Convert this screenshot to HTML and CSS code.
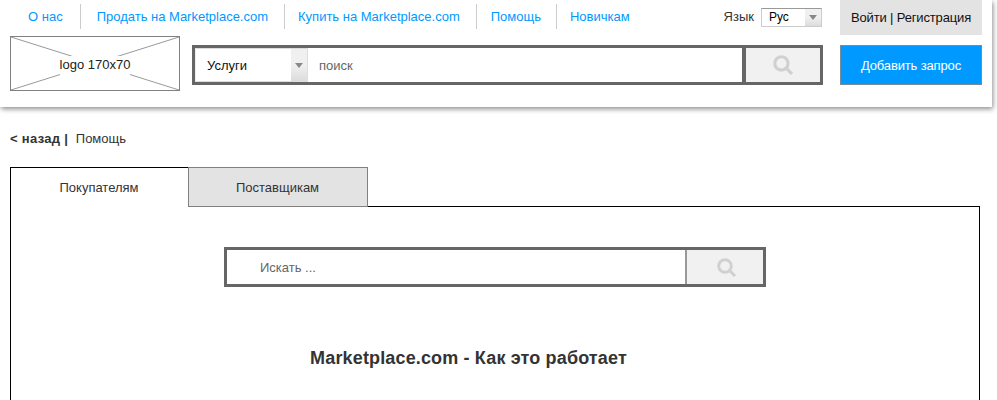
FILE: index.html
```html
<!DOCTYPE html>
<html lang="ru">
<head>
  <meta charset="UTF-8" />
  <title>Marketplace.com – Помощь</title>
  <link rel="stylesheet" href="styles.css">
</head>
<body>

  <header class="site-header">
    <div class="header-main">
      <div class="top-row">
        <nav class="top-nav">
          <a class="nav-first" href="#">О нас</a>
          <a class="nav-sell" href="#">Продать на Marketplace.com</a>
          <a class="nav-buy" href="#">Купить на Marketplace.com</a>
          <a class="nav-help" href="#">Помощь</a>
          <a class="nav-new" href="#">Новичкам</a>
        </nav>
        <div class="lang">
          <span>Язык</span>
          <div class="lang-select">
            <span class="lang-value">Рус</span>
            <span class="select-arrow"><i></i></span>
          </div>
        </div>
      </div>
      <div class="search-row">
        <div class="logo">
          <svg class="logo-cross" width="168" height="53" viewBox="0 0 168 53">
            <path d="M0 0L168 53M168 0L0 53" stroke="#999" stroke-width="1" fill="none"/>
          </svg>
          <span class="logo-text">logo 170x70</span>
        </div>
        <div class="main-search">
          <div class="category">
            <span class="category-value">Услуги</span>
            <span class="select-arrow"><i></i></span>
          </div>
          <div class="search-input">поиск</div>
          <div class="search-btn">
            <svg width="20" height="20" viewBox="0 0 19 19"><circle cx="8" cy="8" r="6.3" fill="none" stroke="#d0d0d0" stroke-width="3"/><path d="M12.5 12.5L18 18" stroke="#d0d0d0" stroke-width="3"/></svg>
          </div>
        </div>
      </div>
    </div>
    <div class="header-actions">
      <a class="login-btn" href="#">Войти | Регистрация</a>
      <a class="add-btn" href="#">Добавить запрос</a>
    </div>
  </header>

  <div class="crumbs"><b>&lt; назад |</b> <span>Помощь</span></div>

  <div class="tabs">
    <div class="tab tab-active">Покупателям</div>
    <div class="tab">Поставщикам</div>
  </div>

  <div class="tab-panel">
    <div class="help-search">
      <div class="help-input">Искать ...</div>
      <div class="help-btn">
        <svg width="19" height="19" viewBox="0 0 19 19"><circle cx="8" cy="8" r="6.3" fill="none" stroke="#d0d0d0" stroke-width="3"/><path d="M12.5 12.5L18 18" stroke="#d0d0d0" stroke-width="3"/></svg>
      </div>
    </div>
    <h1>Marketplace.com - Как это работает</h1>
  </div>

</body>
</html>
```

FILE: styles.css
```css
html, body {
  height: 400px;
  overflow: hidden;
}

body {
  font-family: "Liberation Sans", Arial, sans-serif;
  font-size: 13px;
  color: #333;
  background: #fff;
  margin: 0;
  padding: 0;
}

a {
  text-decoration: none;
}

.site-header {
  display: flex;
  justify-content: space-between;
  width: 992px;
  height: 107px;
  padding: 0 10px;
  box-sizing: border-box;
  background: #fff;
  box-shadow: 1px 2px 5px rgba(0,0,0,0.45);
}

.header-main {
  width: 813px;
}

.top-row {
  display: flex;
  justify-content: space-between;
  height: 36px;
}

.top-nav {
  display: flex;
  align-items: flex-start;
  padding-top: 4px;
}

.top-nav a {
  height: 25px;
  line-height: 25px;
  color: #0099ff;
  border-left: 1px solid #ccc;
}

.top-nav .nav-first {
  border-left: none;
  padding: 0 17px 0 18px;
}

.nav-sell { padding: 0 16px 0 16px; }
.nav-buy { padding: 0 16px 0 13px; }
.nav-help { padding: 0 15px 0 14px; }
.nav-new { padding: 0 0 0 13px; }

.lang {
  display: flex;
  align-items: flex-start;
  padding-top: 7px;
  gap: 7px;
  color: #333;
}

.lang > span {
  line-height: 20px;
}

.lang-select {
  display: flex;
  width: 59px;
  height: 17px;
  margin-top: 1px;
  border: 1px solid #ccc;
  border-top-color: #999;
  margin-right: 1px;
  font-size: 12px;
  line-height: 17px;
  color: #000;
}

.lang-value {
  flex: 1;
  padding-left: 7px;
}

.select-arrow {
  display: flex;
  align-items: center;
  justify-content: center;
  width: 16px;
  background: linear-gradient(#f0f0f0 50%, #dcdcdc);
}

.select-arrow i {
  border-left: 4px solid transparent;
  border-right: 4px solid transparent;
  border-top: 5px solid #888;
}

.search-row {
  display: flex;
  align-items: flex-start;
  gap: 12px;
}

.logo {
  position: relative;
  display: flex;
  align-items: center;
  justify-content: center;
  width: 170px;
  height: 55px;
  box-sizing: border-box;
  border: 1px solid #808080;
  color: #222;
}

.logo-cross {
  position: absolute;
  left: 0;
  top: 0;
}

.logo-text {
  position: relative;
  background: #fff;
  line-height: 16px;
  padding: 1px 0 3px;
  margin-top: 5px;
}

.main-search {
  display: flex;
  width: 631px;
  height: 40px;
  margin-top: 9px;
  box-sizing: border-box;
  border: 3px solid #666;
}

.category {
  display: flex;
  width: 113px;
  border: 1px solid #ddd;
  border-left-color: #eee;
  box-sizing: border-box;
  color: #111;
}

.category-value {
  flex: 1;
  padding-left: 11px;
  line-height: 33px;
}

.search-input {
  flex: 1;
  padding-left: 11px;
  line-height: 35px;
  color: #666;
}

.search-btn {
  display: flex;
  align-items: center;
  justify-content: center;
  width: 74px;
  border-left: 4px solid #666;
  background: #f1f1f1;
}

.header-actions {
  width: 142px;
}

.login-btn {
  display: block;
  height: 35px;
  line-height: 36px;
  text-align: center;
  background: #e3e3e3;
  color: #111;
  letter-spacing: -0.15px;
}

.add-btn {
  display: block;
  height: 40px;
  margin-top: 10px;
  box-sizing: border-box;
  line-height: 39px;
  text-align: center;
  background: #0099ff;
  border: 1px solid #7a8a96;
  color: #fff;
  letter-spacing: -0.15px;
}

.crumbs {
  padding: 24px 0 0 10px;
  line-height: 16px;
  color: #333;
}

.crumbs b {
  letter-spacing: 0.3px;
}

.crumbs span {
  margin-left: 4px;
}

.tabs {
  display: flex;
  margin: 20px 0 0 10px;
  position: relative;
  z-index: 1;
}

.tab {
  width: 180px;
  height: 40px;
  box-sizing: border-box;
  padding-right: 1px;
  line-height: 40px;
  text-align: center;
  background: #e3e3e3;
  border: 1px solid #808080;
}

.tab-active {
  width: 178px;
  height: 40px;
  background: #fff;
  border: 1px solid #000;
  border-right: none;
  border-bottom: none;
}

.tab-panel {
  width: 970px;
  height: 220px;
  margin: -1px 0 0 10px;
  box-sizing: border-box;
  border: 1px solid #000;
  padding-top: 40px;
}

.help-search {
  display: flex;
  width: 542px;
  height: 40px;
  margin-left: 213px;
  box-sizing: border-box;
  border: 3px solid #666;
}

.help-input {
  flex: 1;
  padding-left: 33px;
  line-height: 36px;
  color: #666;
}

.help-btn {
  display: flex;
  align-items: center;
  justify-content: center;
  width: 73px;
  padding-left: 3px;
  border-left: 2px solid #999;
  background: #f1f1f1;
}

h1 {
  margin: 60px 0 0;
  padding-right: 53px;
  font-size: 18px;
  line-height: 22px;
  letter-spacing: 0.15px;
  text-align: center;
  color: #333;
}
```
